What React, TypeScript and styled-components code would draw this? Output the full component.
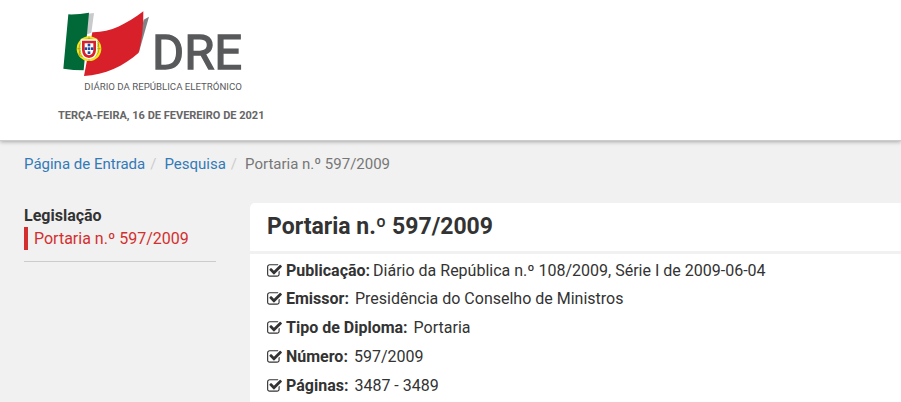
import React from "react";
import styled, { createGlobalStyle } from "styled-components";

const GlobalStyle = createGlobalStyle`
  * { box-sizing: border-box; }
  html { background: #f1f1f1; }
  body {
    margin: 0;
    color: #333;
    font-family: Roboto, "Liberation Sans", sans-serif;
    font-size: 16px;
    line-height: 23px;
  }
`;

const Header = styled.header`
  padding: 0 50px 14px;
  background: #fff;
  border-bottom: 1px solid #ccc;
  box-shadow: 0 1px 4px rgba(0, 0, 0, 0.3);
`;

const HomeLink = styled.a`
  display: block;
  width: fit-content;
`;

const LogoDrawing = styled.svg`
  display: block;
  width: 200px;
  height: 100px;
`;

const Today = styled.p`
  margin: 6px 8px 0;
  color: #666;
  font-size: 11px;
  font-weight: 700;
  line-height: 20px;
  text-transform: uppercase;
`;

const Crumbs = styled.ol`
  display: flex;
  flex-wrap: wrap;
  margin: 0;
  padding: 12px 24px 27px;
  list-style: none;
  font-size: 15px;
`;

const Crumb = styled.li`
  color: #777;
  & + &::before {
    content: "/";
    padding: 0 8px 0 5px;
    color: #ccc;
  }
`;

const CrumbLink = styled.a`
  color: #337ab7;
  text-decoration: none;
`;

const Columns = styled.div`
  display: grid;
  grid-template-columns: 192px 1fr;
  gap: 34px;
  padding-left: 24px;
`;

const Sidebar = styled.nav`
  align-self: start;
  padding-bottom: 11px;
  border-bottom: 1px solid #ccc;
`;

const SidebarTitle = styled.h2`
  margin: 1px 0 0;
  font-size: 16px;
  font-weight: 700;
`;

const SidebarLink = styled.a`
  display: block;
  padding-left: 6px;
  border-left: 4px solid #d32f2f;
  color: #d32f2f;
  text-decoration: none;
`;

const Card = styled.main`
  background: #fff;
  border-top-left-radius: 5px;
`;

const CardTitle = styled.h1`
  margin: 0;
  padding: 8px 17px;
  border-bottom: 3px solid #f1f1f1;
  font-size: 23px;
  font-weight: 700;
  line-height: 32px;
`;

const Details = styled.dl`
  display: grid;
  gap: 6px;
  margin: 0;
  padding: 5px 17px;
`;

const Detail = styled.div<{ $lead?: boolean }>`
  display: flex;
  align-items: center;
  gap: ${(p) => (p.$lead ? 3 : 6)}px;
  margin-bottom: ${(p) => (p.$lead ? -1 : 0)}px;
`;

const Term = styled.dt`
  display: flex;
  align-items: center;
  gap: 4px;
  font-weight: 700;
`;

const Value = styled.dd`
  margin: 0;
`;

const TickDrawing = styled.svg`
  width: 15px;
  height: 16px;
  fill: currentColor;
`;

function Logo() {
  return (
    <LogoDrawing viewBox="0 0 600 300" role="img" aria-label="DRE Diário da República Eletrónico">
      <path d="M114 41L132 39L124 98L106 105Z" fill="#c9cacb" />
      <path d="M281 59L297 50L267 156L262 150Z" fill="#808285" />
      <path d="M55 43Q85 44 117 38L101 211Q70 211 40 206Z" fill="#006937" />
      <path d="M127 97C180 98 230 72 280 34Q281 102 266 158C222 198 164 224 102 228Z" fill="#d8202a" />
      <circle cx="117" cy="146" r="37" fill="#f3e51b" />
      <g fill="none" stroke="#a58b18" strokeWidth="2">
        <circle cx="117" cy="146" r="30" />
        <ellipse cx="117" cy="146" rx="35" ry="13" transform="rotate(-35 117 146)" />
        <path d="M117 109V183M82 146H152" />
      </g>
      <path d="M94 120H140V150Q139 174 117 176Q95 174 94 150Z" fill="#d8202a" stroke="#fff" strokeWidth="4" />
      <path d="M104 130H130V150Q129 164 117 166Q105 164 104 150Z" fill="#fff" />
      <g fill="#24489b">
        <rect x="113" y="131" width="8" height="8" />
        <rect x="104" y="142" width="7" height="8" />
        <rect x="113" y="142" width="8" height="8" />
        <rect x="123" y="142" width="7" height="8" />
        <rect x="113" y="154" width="8" height="8" />
      </g>
      <text x="306" y="208" fill="#58595b" stroke="#58595b" strokeWidth="4" fontFamily="Roboto, sans-serif" fontSize="147">DRE</text>
      <text x="103" y="270" fill="#58595b" fontFamily="Roboto, sans-serif" fontSize="29">DIÁRIO DA REPÚBLICA ELETRÓNICO</text>
    </LogoDrawing>
  );
}

function Tick() {
  return (
    <TickDrawing viewBox="0 0 1664 1792" aria-hidden="true">
      <path d="M1408 930v318q0 119-84.5 203.5t-203.5 84.5h-832q-119 0-203.5-84.5t-84.5-203.5v-832q0-119 84.5-203.5t203.5-84.5h832q63 0 117 25 15 7 18 23 3 17-9 29l-49 49q-10 10-23 10-3 0-9-2-23-6-45-6h-832q-66 0-113 47t-47 113v832q0 66 47 113t113 47h832q66 0 113-47t47-113v-254q0-13 9-22l64-64q10-10 23-10 6 0 12 3 20 8 20 29zm231-489l-814 814q-24 24-57 24t-57-24l-430-430q-24-24-24-57t24-57l110-110q24-24 57-24t57 24l263 263 647-647q24-24 57-24t57 24l110 110q24 24 24 57t-24 57z" />
    </TickDrawing>
  );
}

const details = [
  { term: "Publicação:", value: "Diário da República n.º 108/2009, Série I de 2009-06-04", lead: true },
  { term: "Emissor:", value: "Presidência do Conselho de Ministros" },
  { term: "Tipo de Diploma:", value: "Portaria" },
  { term: "Número:", value: "597/2009" },
  { term: "Páginas:", value: "3487 - 3489" },
];

export default function App() {
  return (
    <>
      <GlobalStyle />
      <Header>
        <HomeLink href="#inicio"><Logo /></HomeLink>
        <Today>Terça-feira, 16 de fevereiro de 2021</Today>
      </Header>
      <nav aria-label="Localização">
        <Crumbs>
          <Crumb><CrumbLink href="#inicio">Página de Entrada</CrumbLink></Crumb>
          <Crumb><CrumbLink href="#pesquisa">Pesquisa</CrumbLink></Crumb>
          <Crumb aria-current="page">Portaria n.º 597/2009</Crumb>
        </Crumbs>
      </nav>
      <Columns>
        <Sidebar>
          <SidebarTitle>Legislação</SidebarTitle>
          <SidebarLink href="#portaria">Portaria n.º 597/2009</SidebarLink>
        </Sidebar>
        <Card id="portaria">
          <CardTitle>Portaria n.º 597/2009</CardTitle>
          <Details>
            {details.map((d) => (
              <Detail key={d.term} $lead={d.lead}>
                <Term><Tick />{d.term}</Term>
                <Value>{d.value}</Value>
              </Detail>
            ))}
          </Details>
        </Card>
      </Columns>
    </>
  );
}
